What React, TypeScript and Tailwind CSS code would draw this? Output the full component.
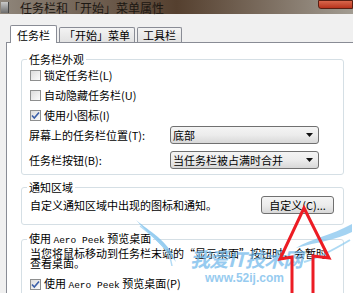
import React from 'react';

const FONT = "font-['Noto_Sans_CJK_SC','Noto_Sans',sans-serif]";

function Checkbox({ checked }: { checked?: boolean }) {
  return (
    <span className="relative w-[11px] h-[11px] border border-[#8e8f8f] bg-gradient-to-br from-[#dcdcdc] to-[#fbfbfb] shrink-0">
      {checked && (
        <svg className="absolute -left-[1px] -top-[1px]" width="11" height="11" viewBox="0 0 11 11">
          <path d="M2 5.5 L4.3 8 L9 2.5" fill="none" stroke="#3b5fa8" strokeWidth="1.6" />
        </svg>
      )}
    </span>
  );
}

function CheckRow({ label, checked }: { label: React.ReactNode; checked?: boolean }) {
  return (
    <div className="flex items-center gap-[3px] h-[20px] pl-[8px]">
      <Checkbox checked={checked} />
      <span>{label}</span>
    </div>
  );
}

function Combo({ text }: { text: string }) {
  return (
    <div className="w-[149px] h-[18px] border border-[#707070] rounded-[3px] bg-gradient-to-b from-[#f4f4f4] via-[#ececec] to-[#d8d8d8] flex items-center justify-between pl-[2px] pr-[5px]">
      <span>{text}</span>
      <svg width="7" height="4" viewBox="0 0 7 4">
        <path d="M0 0 H7 L3.5 4 Z" fill="#111" />
      </svg>
    </div>
  );
}

function Mono({ children }: { children: React.ReactNode }) {
  return <span className="font-['Liberation_Mono',monospace] text-[9.5px]">{children}</span>;
}

export default function App() {
  return (
    <div className={`relative w-[353px] h-[293px] overflow-hidden bg-[#f0f0f0] text-[11px] leading-[12px] text-black ${FONT}`}>
      {/* Title bar */}
      <div className="h-[14px] flex items-center bg-gradient-to-r from-[#8f867b] via-[#55402f] to-[#a29c92] relative">
        <div className="w-[8px] h-[11px] ml-[1px] bg-gradient-to-b from-[#c9c9c9] to-[#6d6d6d] border-r border-[#444]" />
        <span className="ml-[11px] text-[12px] leading-[13px] text-[#1c1712]">任务栏和「开始」菜单属性</span>
        <div className="ml-auto w-[35px] h-[9px] self-start bg-gradient-to-b from-[#d9664b] to-[#b8321b] border border-[#5a1f12] rounded-bl-[3px]" />
      </div>

      {/* Tabs */}
      <div className="flex items-end pl-[10px] pt-[10px] h-[28px]">
        <div className="h-[18px] px-[6px] bg-white border border-b-0 border-[#898c95] rounded-t-[2px] flex items-center relative z-10 -mb-[1px]">
          任务栏
        </div>
        <div className="h-[15px] ml-[2px] px-[4px] bg-gradient-to-b from-[#f3f3f3] to-[#e2e2e2] border border-b-0 border-[#898c95] rounded-t-[2px] flex items-center">
          「开始」菜单
        </div>
        <div className="h-[15px] ml-[2px] px-[5px] bg-gradient-to-b from-[#f3f3f3] to-[#e2e2e2] border border-b-0 border-[#898c95] rounded-t-[2px] flex items-center">
          工具栏
        </div>
      </div>

      {/* Panel */}
      <div className="ml-[6px] h-[260px] bg-white border-l border-t border-[#898c95] pl-[14px] pr-[9px]">
        <fieldset className="mt-[10px] border border-[#d5dfe5] rounded-[3px] h-[122px]">
          <legend className="ml-[5px] px-[2px]">任务栏外观</legend>
          <CheckRow label="锁定任务栏(L)" />
          <CheckRow label="自动隐藏任务栏(U)" />
          <CheckRow label="使用小图标(I)" checked />
          <div className="flex items-center justify-between h-[20px] pl-[7px] pr-[24px]">
            <span>屏幕上的任务栏位置(T):</span>
            <Combo text="底部" />
          </div>
          <div className="flex items-center justify-between h-[20px] mt-[5px] pl-[7px] pr-[24px]">
            <span>任务栏按钮(B):</span>
            <Combo text="当任务栏被占满时合并" />
          </div>
        </fieldset>

        <fieldset className="mt-[6px] border border-[#d5dfe5] rounded-[3px] h-[44px]">
          <legend className="ml-[5px] px-[2px]">通知区域</legend>
          <div className="flex items-center justify-between h-[20px] mt-[2px] pl-[8px] pr-[9px]">
            <span>自定义通知区域中出现的图标和通知。</span>
            <div className="w-[73px] h-[18px] border border-[#707070] rounded-[3px] bg-gradient-to-b from-[#f4f4f4] via-[#ececec] to-[#d8d8d8] flex items-center justify-center">
              自定义(C)...
            </div>
          </div>
        </fieldset>

        <fieldset className="mt-[7px] border border-[#d5dfe5] rounded-[3px] h-[70px]">
          <legend className="ml-[5px] px-[2px]">
            使用 <Mono>Aero Peek</Mono> 预览桌面
          </legend>
          <div className="pl-[8px] leading-[10px] mt-[1px]">
            <div className="whitespace-nowrap">当您将鼠标移动到任务栏末端的“显示桌面”按钮时，会暂时</div>
            <div>查看桌面。</div>
          </div>
          <div className="mt-[6px]">
            <CheckRow
              checked
              label={
                <>
                  使用 <Mono>Aero Peek</Mono> 预览桌面(P)
                </>
              }
            />
          </div>
        </fieldset>
      </div>

      {/* Watermark */}
      <svg className="absolute left-0 top-0 pointer-events-none" width="353" height="293" viewBox="0 0 353 293">
        <path d="M136 220 C150 232 168 240 176 262 C164 246 150 236 136 220 Z" fill="#7dc0ec" opacity="0.8" />
        <path d="M140 226 C158 240 170 250 172 266" fill="none" stroke="#9fd2f2" strokeWidth="1.5" opacity="0.8" />
        <path d="M352 224 C330 236 312 238 296 248 C318 242 336 240 352 232 Z" fill="#7dc0ec" opacity="0.7" />
        <path d="M350 240 C330 252 318 258 304 262" fill="none" stroke="#8ccaf0" strokeWidth="2" opacity="0.7" />
      </svg>
      <div className="absolute left-[190px] top-[249px] pointer-events-none text-[20px] leading-[20px] font-bold italic text-[#6cb6ea] opacity-70 tracking-[-1px]">
        我爱IT技术网
      </div>
      <div className="absolute left-[205px] top-[272px] pointer-events-none font-['Liberation_Sans',sans-serif] text-[12px] leading-[12px] font-bold text-[#6cb6ea] opacity-70">
        www.52ij.com
      </div>

      {/* Red arrow */}
      <svg className="absolute left-0 top-0 pointer-events-none" width="353" height="293" viewBox="0 0 353 293">
        <path
          d="M292 295 L292 257 L280 259 L304 208 L329 258 L313 256 L313 295"
          fill="none"
          stroke="#ec1c24"
          strokeWidth="3"
          strokeLinejoin="miter"
        />
      </svg>
    </div>
  );
}
